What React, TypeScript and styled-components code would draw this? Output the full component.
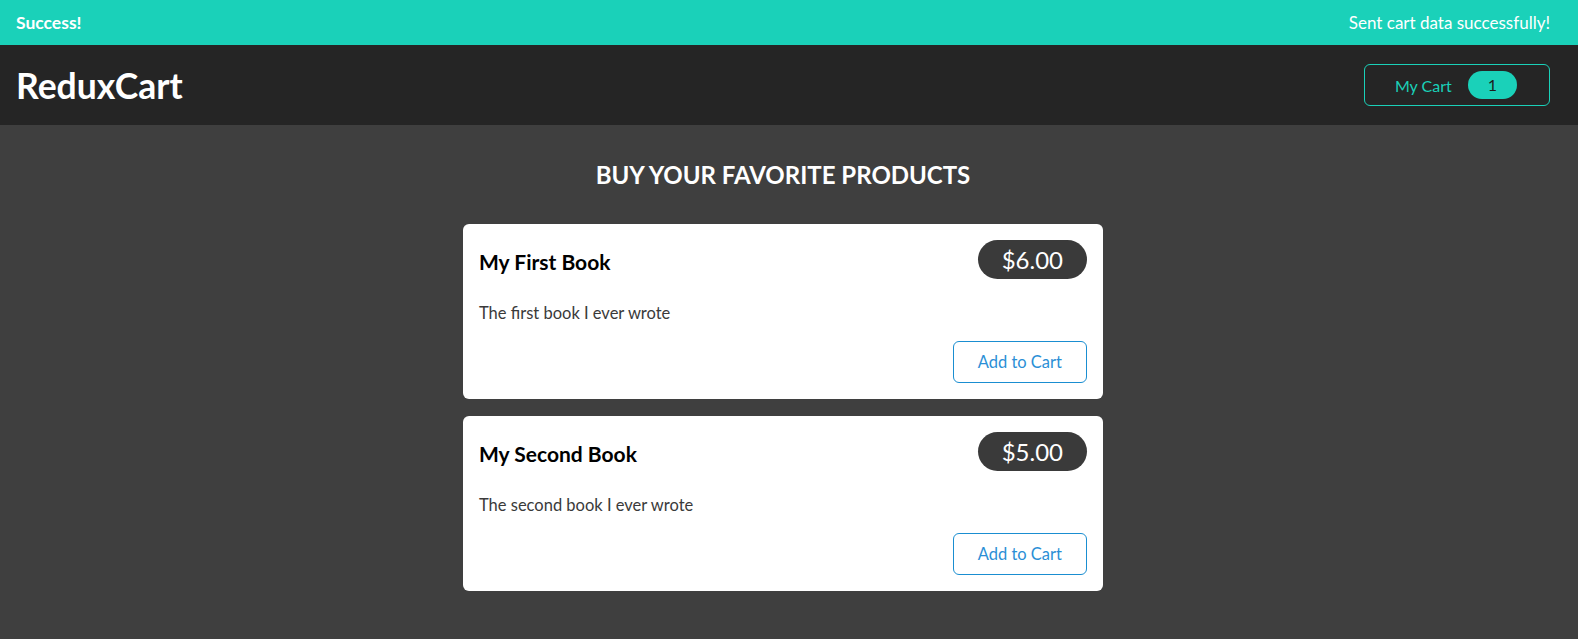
import React from "react";
import styled, { createGlobalStyle } from "styled-components";

const GlobalStyle = createGlobalStyle`
  * { box-sizing: border-box; }
  html, body {
    margin: 0;
    padding: 0;
    background: #3f3f3f;
    font-family: Lato, "Noto Sans", sans-serif;
  }
`;

const Notification = styled.section`
  height: 45px;
  background: #1ad1b9;
  color: #ffffff;
  display: flex;
  justify-content: space-between;
  align-items: center;
  padding: 0 28px 0 16px;
  font-size: 17px;
`;

const NoteTitle = styled.h2`
  margin: 0;
  font-size: 17.5px;
  font-weight: 700;
`;

const NoteMessage = styled.p`
  margin: 0;
`;

const Header = styled.header`
  height: 80px;
  background: #252525;
  display: flex;
  justify-content: space-between;
  align-items: center;
  padding: 0 28px 0 16px;
`;

const Logo = styled.h1`
  margin: 0;
  color: #ffffff;
  font-size: 35.5px;
  font-weight: 700;
`;

const CartButton = styled.button`
  display: flex;
  align-items: center;
  height: 42px;
  padding: 0 32px 0 30px;
  background: transparent;
  border: 1px solid #1ad1b9;
  border-radius: 6px;
  color: #1ad1b9;
  font-family: inherit;
  font-size: 16px;
  cursor: pointer;
`;

const Badge = styled.span`
  margin-left: 16px;
  height: 28px;
  line-height: 28px;
  padding: 0 20px;
  border-radius: 30px;
  background: #1ad1b9;
  color: #1d1d1d;
`;

const Main = styled.main`
  padding-right: 12px;
`;

const Products = styled.section`
  width: 640px;
  margin: 0 auto;
  padding: 35px 0 32px;
`;

const Heading = styled.h2`
  margin: 0 0 34px;
  color: #ffffff;
  font-size: 24px;
  line-height: 30px;
  font-weight: 700;
  text-align: center;
  text-transform: uppercase;
`;

const List = styled.ul`
  list-style: none;
  margin: 0;
  padding: 0;
  display: flex;
  flex-direction: column;
  gap: 16.5px;
`;

const Card = styled.li`
  background: #ffffff;
  border-radius: 6px;
  padding: 16px;
`;

const CardHeader = styled.header`
  display: flex;
  justify-content: space-between;
  align-items: center;
`;

const Title = styled.h3`
  margin: 4px 0 0;
  font-size: 21px;
  font-weight: 700;
  color: #000000;
`;

const Price = styled.div`
  background: #3a3a3a;
  color: #ffffff;
  border-radius: 30px;
  padding: 5px 24px;
  font-size: 24px;
  line-height: 29px;
`;

const Description = styled.p`
  margin: 22px 0 0;
  color: #3a3a3a;
  font-size: 16.5px;
  line-height: 24px;
`;

const Actions = styled.div`
  display: flex;
  justify-content: flex-end;
  margin-top: 16px;
`;

const AddButton = styled.button`
  height: 42px;
  padding: 0 24px;
  background: transparent;
  border: 1px solid #1a8ed1;
  border-radius: 6px;
  color: #2b8fd6;
  font-family: inherit;
  font-size: 16.5px;
  cursor: pointer;
`;

const products = [
  { id: "p1", title: "My First Book", price: 6, description: "The first book I ever wrote" },
  { id: "p2", title: "My Second Book", price: 5, description: "The second book I ever wrote" },
];

export default function App() {
  return (
    <>
      <GlobalStyle />
      <Notification>
        <NoteTitle>Success!</NoteTitle>
        <NoteMessage>Sent cart data successfully!</NoteMessage>
      </Notification>
      <Header>
        <Logo>ReduxCart</Logo>
        <CartButton>
          <span>My Cart</span>
          <Badge>1</Badge>
        </CartButton>
      </Header>
      <Main>
        <Products>
          <Heading>Buy your favorite products</Heading>
          <List>
            {products.map((p) => (
              <Card key={p.id}>
                <CardHeader>
                  <Title>{p.title}</Title>
                  <Price>${p.price.toFixed(2)}</Price>
                </CardHeader>
                <Description>{p.description}</Description>
                <Actions>
                  <AddButton>Add to Cart</AddButton>
                </Actions>
              </Card>
            ))}
          </List>
        </Products>
      </Main>
    </>
  );
}
